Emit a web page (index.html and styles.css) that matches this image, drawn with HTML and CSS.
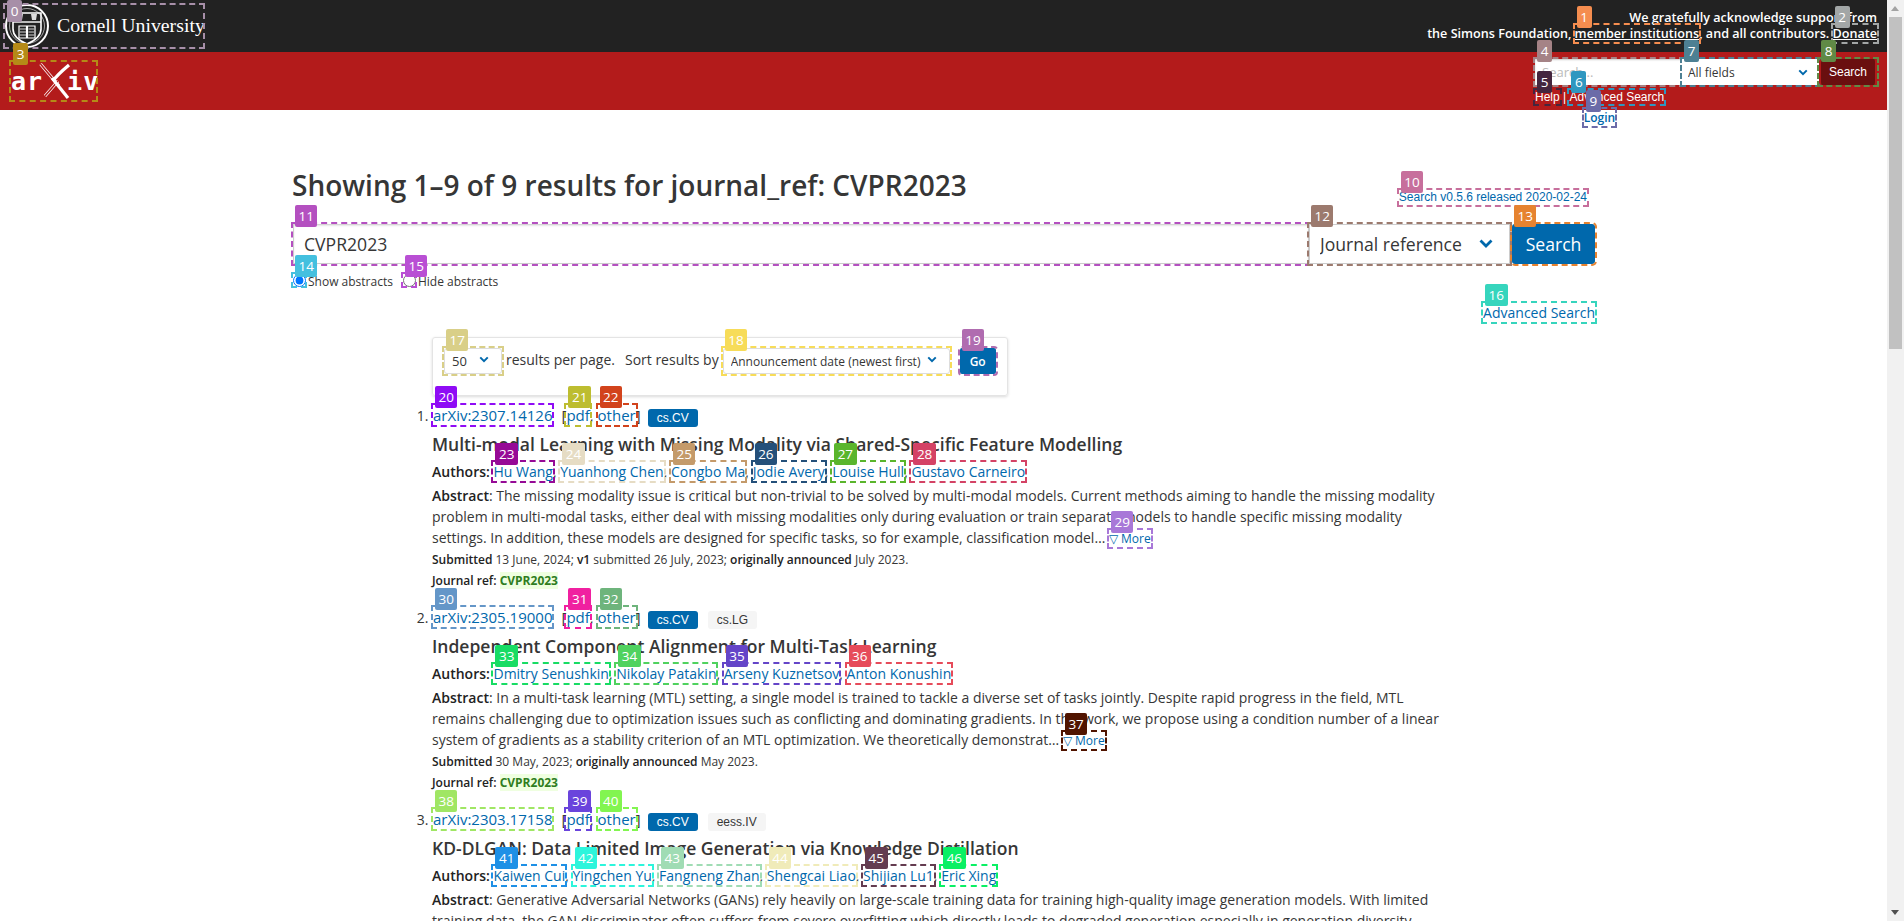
FILE: index.html
```html
<!DOCTYPE html>
<html lang="en">
<head>
<meta charset="utf-8">
<title>Search | arXiv e-print repository</title>
<link rel="stylesheet" href="styles.css">
</head>
<body>
<div class="page">
  <header>
    <div class="topbar">
      <a class="anno c0 cornell"><span class="badge">0</span>
        <svg class="seal" viewBox="0 0 46 46" width="46" height="46" aria-hidden="true">
          <circle cx="23" cy="23" r="21" fill="none" stroke="#fff" stroke-width="2"/>
          <circle cx="23" cy="23" r="17.5" fill="none" stroke="#fff" stroke-width=".6"/>
          <path d="M9 10h28v16c0 8-7 12-14 15C16 38 9 34 9 26z" fill="none" stroke="#fff" stroke-width="1.6"/>
          <path d="M9 19h28" stroke="#fff" stroke-width="1.4"/>
          <path d="M13 11h6l-1 6h-4zM27 11h6l-1 6h-4z" fill="#ddd"/>
          <path d="M15 23h7.500v12H15zM23.500 23H31v12h-7.500z" fill="none" stroke="#fff" stroke-width="1.2"/>
          <path d="M16 26h6M16 29h6M16 32h6M24.500 26H30M24.500 29H30M24.500 32H30" stroke="#fff" stroke-width=".8"/>
        </svg>
        <span class="cornell-name">Cornell University</span>
      </a>
      <div class="ack">
        <div>We gratefully acknowledge support from</div>
        <div>the Simons Foundation, <a class="anno c1 under"><span class="badge">1</span>member institutions</a>, and all contributors. <a class="anno c2 under"><span class="badge">2</span>Donate</a></div>
      </div>
    </div>
    <div class="redbar">
      <a class="anno c3 arxiv"><span class="badge">3</span>
        <span class="arxiv-text">ar</span>
        <svg class="arxiv-x" viewBox="0 0 24 36" width="24" height="36" aria-hidden="true">
          <path d="M-2.500 1 16 23" stroke="#fff" stroke-width="3" fill="none"/>
          <path d="M-2.500 1 16 23" stroke="#b31b1b" stroke-width="1.600" fill="none"/>
          <path d="M2 33 15 18" stroke="#fff" stroke-width="3" fill="none"/>
          <path d="M2 33 15 18" stroke="#b31b1b" stroke-width="1.600" fill="none"/>
          <path d="M26 2C20 7 14 12 10 18" stroke="#fff" stroke-width="3.200" fill="none"/>
          <path d="M9 15 25 35" stroke="#fff" stroke-width="3.200" fill="none"/>
        </svg>
        <span class="arxiv-text">iv</span>
      </a>
      <div class="quick">
        <div class="quick-form">
          <span class="anno c4 qwrap"><span class="badge">4</span><input class="qinput" placeholder="Search..." aria-label="Search term"></span>
          <span class="anno c7 qwrap qselect"><span class="badge">7</span><select class="qsel" aria-label="Field"><option>All fields</option></select>
            <svg class="chev chev-s" viewBox="0 0 12 8" width="10" height="7" aria-hidden="true"><path d="M1.500 1.500 6 6l4.500-4.500" fill="none" stroke="#0068ac" stroke-width="2.400"/></svg></span>
          <span class="anno c8 qwrap"><span class="badge">8</span><button class="qbtn" type="button">Search</button></span>
        </div>
        <div class="quick-links"><a class="anno c5"><span class="badge">5</span>Help</a> | <a class="anno c6"><span class="badge">6</span>Advanced Search</a></div>
        <div class="quick-login"><a class="anno c9"><span class="badge">9</span>Login</a></div>
      </div>
    </div>
  </header>

  <main class="main">
    <div class="head-row">
      <h1>Showing 1–9 of 9 results for journal_ref: CVPR2023</h1>
      <a class="anno c10 release"><span class="badge">10</span>Search v0.5.6 released 2020-02-24</a>
    </div>
    <form class="search-row">
      <span class="anno c11 term"><span class="badge">11</span><input class="term-input" value="CVPR2023" aria-label="Search term"></span>
      <span class="anno c12 field"><span class="badge">12</span><select class="field-sel" aria-label="Field"><option>Journal reference</option></select>
        <svg class="chev chev-l" viewBox="0 0 14 9" width="14" height="9" aria-hidden="true"><path d="M1.500 1.500 7 7l5.500-5.500" fill="none" stroke="#0068ac" stroke-width="2.800"/></svg></span>
      <button class="anno c13 go-big" type="button"><span class="badge">13</span>Search</button>
    </form>
    <div class="radios">
      <span class="anno c14 rwrap"><span class="badge">14</span><input type="radio" name="abs" checked aria-label="Show abstracts"></span><span class="rlabel">Show abstracts</span>
      <span class="anno c15 rwrap rsecond"><span class="badge">15</span><input type="radio" name="abs" aria-label="Hide abstracts"></span><span class="rlabel">Hide abstracts</span>
    </div>
    <div class="adv-row"><a class="anno c16"><span class="badge">16</span>Advanced Search</a></div>

    <section class="results">
      <div class="options">
        <span class="anno c17 owrap"><span class="badge">17</span><select class="osel osel-n" aria-label="Results per page"><option>50</option></select>
          <svg class="chev chev-o" viewBox="0 0 12 8" width="10" height="7" aria-hidden="true"><path d="M1.500 1.500 6 6l4.500-4.500" fill="none" stroke="#0068ac" stroke-width="2.400"/></svg></span>
        <span class="otext">results per page.</span>
        <span class="otext otext-sort">Sort results by</span>
        <span class="anno c18 owrap"><span class="badge">18</span><select class="osel osel-s" aria-label="Sort"><option>Announcement date (newest first)</option></select>
          <svg class="chev chev-o" viewBox="0 0 12 8" width="10" height="7" aria-hidden="true"><path d="M1.500 1.500 6 6l4.500-4.500" fill="none" stroke="#0068ac" stroke-width="2.400"/></svg></span>
        <button class="anno c19 go" type="button"><span class="badge">19</span>Go</button>
      </div>

      <ol class="list">
        <li class="item">
          <div class="idrow"><a class="anno c20 aid"><span class="badge">20</span>arXiv:2307.14126</a><span class="files">[<a class="anno c21"><span class="badge">21</span>pdf</a>, <a class="anno c22"><span class="badge">22</span>other</a>]</span><span class="tag tag-p">cs.CV</span></div>
          <p class="title">Multi-modal Learning with Missing Modality via Shared-Specific Feature Modelling</p>
          <p class="authors"><b>Authors:</b> <a class="anno c23"><span class="badge">23</span>Hu Wang</a>, <a class="anno c24"><span class="badge">24</span>Yuanhong Chen</a>, <a class="anno c25"><span class="badge">25</span>Congbo Ma</a>, <a class="anno c26"><span class="badge">26</span>Jodie Avery</a>, <a class="anno c27"><span class="badge">27</span>Louise Hull</a>, <a class="anno c28"><span class="badge">28</span>Gustavo Carneiro</a></p>
          <p class="abstract"><b>Abstract</b>: The missing modality issue is critical but non-trivial to be solved by multi-modal models. Current methods aiming to handle the missing modality problem in multi-modal tasks, either deal with missing modalities only during evaluation or train separate models to handle specific missing modality settings. In addition, these models are designed for specific tasks, so for example, classification model… <a class="anno c29 more"><span class="badge">29</span>▽ More</a></p>
          <p class="meta"><b>Submitted</b> 13 June, 2024; <b>v1</b> submitted 26 July, 2023; <b>originally announced</b> July 2023.</p>
          <p class="meta"><b>Journal ref:</b> <mark class="hl">CVPR2023</mark></p>
        </li>
        <li class="item">
          <div class="idrow"><a class="anno c30 aid"><span class="badge">30</span>arXiv:2305.19000</a><span class="files">[<a class="anno c31"><span class="badge">31</span>pdf</a>, <a class="anno c32"><span class="badge">32</span>other</a>]</span><span class="tag tag-p">cs.CV</span><span class="tag tag-g">cs.LG</span></div>
          <p class="title">Independent Component Alignment for Multi-Task Learning</p>
          <p class="authors"><b>Authors:</b> <a class="anno c33"><span class="badge">33</span>Dmitry Senushkin</a>, <a class="anno c34"><span class="badge">34</span>Nikolay Patakin</a>, <a class="anno c35"><span class="badge">35</span>Arseny Kuznetsov</a>, <a class="anno c36"><span class="badge">36</span>Anton Konushin</a></p>
          <p class="abstract"><b>Abstract</b>: In a multi-task learning (MTL) setting, a single model is trained to tackle a diverse set of tasks jointly. Despite rapid progress in the field, MTL remains challenging due to optimization issues such as conflicting and dominating gradients. In this work, we propose using a condition number of a linear system of gradients as a stability criterion of an MTL optimization. We theoretically demonstrat… <a class="anno c37 more"><span class="badge">37</span>▽ More</a></p>
          <p class="meta"><b>Submitted</b> 30 May, 2023; <b>originally announced</b> May 2023.</p>
          <p class="meta"><b>Journal ref:</b> <mark class="hl">CVPR2023</mark></p>
        </li>
        <li class="item">
          <div class="idrow"><a class="anno c38 aid"><span class="badge">38</span>arXiv:2303.17158</a><span class="files">[<a class="anno c39"><span class="badge">39</span>pdf</a>, <a class="anno c40"><span class="badge">40</span>other</a>]</span><span class="tag tag-p">cs.CV</span><span class="tag tag-g">eess.IV</span></div>
          <p class="title">KD-DLGAN: Data Limited Image Generation via Knowledge Distillation</p>
          <p class="authors"><b>Authors:</b> <a class="anno c41"><span class="badge">41</span>Kaiwen Cui</a>, <a class="anno c42"><span class="badge">42</span>Yingchen Yu</a>, <a class="anno c43"><span class="badge">43</span>Fangneng Zhan</a>, <a class="anno c44"><span class="badge">44</span>Shengcai Liao</a>, <a class="anno c45"><span class="badge">45</span>Shijian Lu1</a>, <a class="anno c46"><span class="badge">46</span>Eric Xing</a></p>
          <p class="abstract"><b>Abstract</b>: Generative Adversarial Networks (GANs) rely heavily on large-scale training data for training high-quality image generation models. With limited training data, the GAN discriminator often suffers from severe overfitting which directly leads to degraded generation especially in generation diversity.</p>
        </li>
      </ol>
    </section>
  </main>
</div>
<aside class="scrollbar" aria-hidden="true">
  <div class="sb-up"></div>
  <div class="sb-thumb"></div>
  <div class="sb-down"></div>
</aside>
</body>
</html>
```
FILE: styles.css
```css
* { box-sizing: border-box; }
html, body { margin: 0; height: 100%; overflow: hidden; }
body { display: flex; font-family: "Open Sans", sans-serif; color: #363636; background: #fff; font-size: 14px; }
.page { flex: 1; min-width: 0; height: 100vh; overflow: hidden; }
p { margin: 0; }
a { color: #0068ac; cursor: pointer; }

/* numbered annotation overlay */
.anno { position: relative; outline: 2px dashed var(--c); }
.badge { position: absolute; left: 2px; top: -19px; height: 22px; min-width: 15px; padding: 0 3.5px; border-radius: 2px; background: var(--c); color: #fff; font: 400 13.5px/22px "Open Sans", sans-serif; text-align: center; z-index: 20; text-decoration: none; white-space: nowrap; }
.c0{--c:#a78fa8}.c1{--c:#f58d4f}.c2{--c:#a2a6a6}.c3{--c:#b58a17}.c4{--c:#a58386}.c5{--c:#44263f}.c6{--c:#2f97c0}.c7{--c:#4d8093}.c8{--c:#608a46}.c9{--c:#6b6ba8}
.c10{--c:#c76f9c}.c11{--c:#b450c0}.c12{--c:#9c7a6e}.c13{--c:#e68330}.c14{--c:#44c0df}.c15{--c:#b94fd4}.c16{--c:#36d5bd}.c17{--c:#d9cf88}.c18{--c:#f7dc59}.c19{--c:#b06cb0}
.c20{--c:#8f0cf5}.c21{--c:#bdbd30}.c22{--c:#d2431c}.c23{--c:#960a96}.c24{--c:#e6dcc4}.c25{--c:#c49a6a}.c26{--c:#24507a}.c27{--c:#5ab52c}.c28{--c:#d44265}.c29{--c:#a878d8}
.c30{--c:#6496c8}.c31{--c:#f020a0}.c32{--c:#6eb47c}.c33{--c:#18dc64}.c34{--c:#50d25f}.c35{--c:#6445c8}.c36{--c:#e64b5a}.c37{--c:#501400}.c38{--c:#a0e664}.c39{--c:#6a44dc}
.c40{--c:#82f550}.c41{--c:#1e90e6}.c42{--c:#2df5dc}.c43{--c:#a0dcb4}.c44{--c:#f0ebb9}.c45{--c:#643c50}.c46{--c:#0af064}

/* top bars */
.topbar { height: 52px; background: #222; display: flex; justify-content: space-between; color: #fff; }
.cornell { display: flex; align-items: center; margin: 5px 0 0 5px; width: 198px; height: 42px; color: #fff; }
.c0 .badge { top: -5px; left: 2px; }
.seal { flex: none; margin-left: -1px; }
.cornell-name { font: 400 19.800px/1 "Liberation Serif", serif; margin-left: 7px; white-space: nowrap; }
.ack { padding: 10px 10px 0 0; text-align: right; font-weight: 600; font-size: 12.600px; line-height: 16px; white-space: nowrap; }
.under { color: #fff; text-decoration: underline; }
.redbar { height: 58px; background: #b31b1b; display: flex; justify-content: space-between; color: #fff; }
.arxiv { display: flex; align-items: center; margin: 10px 0 0 11px; width: 85px; height: 38px; color: #fff; }
.arxiv-text { font: 700 25px/1 "DejaVu Sans Mono", monospace; letter-spacing: 1px; }
.arxiv-x { flex: none; overflow: visible; width: 24px; }
.quick { width: 342px; margin: 7px 10px 0 0; font: 400 12px/15px "Liberation Sans", sans-serif; text-align: center; }
.quick-form { display: flex; height: 26px; }
.qwrap { display: block; height: 26px; }
.qinput { display: block; width: 148px; height: 26px; border: 0; padding: 0 7px; font: 400 13px "Open Sans", sans-serif; background: #fff; box-shadow: inset 0 1px 2px rgba(0,0,0,.2); }
.qinput::placeholder { color: #bbb; }
.qselect { margin-left: -1px; position: relative; }
.qsel { display: block; width: 137px; height: 26px; border: 0; border-radius: 0; padding: 0 0 0 6px; appearance: none; background: #fff; color: #363636; font: 400 12px "Open Sans", sans-serif; }
.chev { position: absolute; pointer-events: none; }
.chev-s { right: 11px; top: 10px; }
.qbtn { display: block; width: 58px; height: 26px; padding: 0; border: 2px solid #b31b1b; border-bottom-width: 0; border-top-width: 0; border-radius: 3px; background: #6a0f0f; color: #fff; font: 400 12px "Liberation Sans", sans-serif; }
.quick-links { margin-top: 5px; text-align: left; width: 129px; white-space: nowrap; }
.quick-links a { color: #fff; }
.quick-login { width: 129px; margin-top: 5px; font: 600 12px/16px "Open Sans", sans-serif; }

/* main */
.main { width: 1302px; margin-left: 293px; padding-top: 58px; }
.head-row { display: flex; justify-content: space-between; align-items: flex-end; padding-right: 8px; height: 38px; }
h1 { margin: 0; font-size: 28px; line-height: 34px; font-weight: 600; color: #363636; align-self: flex-start; white-space: nowrap; margin-left: -1px; }
.release { font: 400 12px/15px "Liberation Sans", sans-serif; margin-bottom: 1px; }
.search-row { display: flex; height: 40px; margin-top: 18px; }
.term { flex: 1; display: block; min-width: 0; }
.term-input { display: block; width: 100%; height: 40px; border: 1px solid #ccc; border-top-color: #d4d4d4; padding: 0 10px; font: 400 17.600px "Open Sans", sans-serif; color: #363636; box-shadow: inset 0 1px 2px rgba(0,0,0,.1); }
.field { display: block; position: relative; width: 201px; flex: none; }
.field-sel { display: block; width: 100%; height: 40px; border: 1px solid #ccc; border-radius: 0; padding: 0 0 0 10px; appearance: none; background: #fff; color: #363636; font: 400 17.600px "Open Sans", sans-serif; }
.chev-l { right: 17px; top: 15px; }
.go-big { display: block; flex: none; width: 83px; height: 40px; margin-left: 2px; border: 0; border-radius: 3px; background: #0068ac; color: #fff; font: 400 17.600px "Open Sans", sans-serif; padding: 0; }
.radios { display: flex; align-items: flex-start; margin-top: 10px; height: 17px; font-size: 12px; line-height: 16px; }
.rwrap { display: block; width: 12px; height: 12px; }
.rwrap input { display: block; margin: 0; width: 13px; height: 13px; }
.rlabel { margin-left: 3px; }
.rsecond { margin-left: 10px; }
.adv-row { text-align: right; margin-top: 12px; height: 34px; line-height: 20px; }

/* results */
.results { padding-left: 139px; width: 1152px; }
.options { display: flex; align-items: flex-start; width: 576px; height: 59px; padding: 10px 0 0 11px; border: 1px solid #e4e4e4; border-radius: 3px; box-shadow: 0 1px 3px rgba(0,0,0,.15); }
.owrap { display: block; position: relative; }
.osel { display: block; height: 26px; border: 1px solid #ddd; border-radius: 3px; appearance: none; background: #fff; padding: 0 0 0 7px; color: #363636; font: 400 12px "Open Sans", sans-serif; }
.osel-n { width: 58px; font-size: 13px; }
.osel-s { width: 227px; }
.chev-o { right: 13px; top: 8px; }
.otext { line-height: 24px; margin-left: 4px; }
.otext-sort { margin-left: 10px; }
.owrap + .otext { margin-left: 4px; }
.otext-sort + .owrap { margin-left: 4px; }
.go { display: block; width: 36px; height: 26px; margin-left: 10px; padding: 0; border: 0; border-radius: 2px; background: #0068ac; color: #fff; font: 600 12px "Open Sans", sans-serif; }
.list { margin: 7px 0 0; padding: 0; }
.item { height: 202px; }
.idrow { display: flex; align-items: center; height: 24px; padding-left: 1px; white-space: nowrap; font-size: 15px; }
.files { margin-left: 9px; }
.tag { display: block; height: 18px; margin-top: 5px; padding: 0 9px; border-radius: 3px; font: 400 12px/18px "Liberation Sans", sans-serif; }
.tag-p { margin-left: 7px; background: #0068ac; color: #fff; }
.tag-g { margin-left: 10px; background: #f5f5f5; color: #363636; }
.title { margin-top: 4px; font-size: 17.500px; line-height: 26px; font-weight: 600; color: #363636; white-space: nowrap; }
.authors { margin-top: 4px; line-height: 22px; white-space: nowrap; }
.authors b { font-weight: 600; color: #222; }
.abstract { margin-top: 2px; line-height: 21px; }
.abstract b { font-weight: 600; color: #222; }
.more { font-size: 12px; }
.meta { font-size: 12px; line-height: 20px; }
.abstract + .meta { margin-top: 1px; }
.meta + .meta { margin-top: 1px; }
.meta b { font-weight: 600; color: #222; }
.hl { background: #efffe0; color: #2f7d1e; font-weight: 700; padding: 0; }

/* scrollbar */
.scrollbar { flex: none; width: 17px; height: 100vh; background: #f1f1f1; display: flex; flex-direction: column; align-items: center; }
.sb-up { height: 17px; width: 17px; flex: none; position: relative; }
.sb-up::after { content: ""; position: absolute; left: 4px; top: 6px; border: 4px solid transparent; border-top: 0; border-bottom: 5px solid #a3a3a3; }
.sb-thumb { width: 13px; height: 332px; background: #c1c1c1; }
.sb-down { margin-top: auto; height: 17px; width: 17px; position: relative; }
.sb-down::after { content: ""; position: absolute; left: 4px; top: 6px; border: 4px solid transparent; border-bottom: 0; border-top: 5px solid #505050; }
```
